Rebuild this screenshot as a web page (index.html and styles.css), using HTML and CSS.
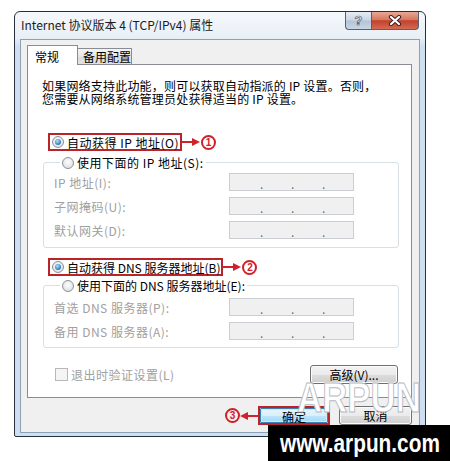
FILE: index.html
```html
<!DOCTYPE html>
<html lang="zh-CN">

<head>
    <meta charset="UTF-8">
    <title>Internet 协议版本 4 (TCP/IPv4) 属性</title>
    <link rel="stylesheet" href="styles.css">
</head>

<body>

    <div class="window">
        <div class="titlebar">
            <span class="title">Internet 协议版本 4 (TCP/IPv4) 属性</span>
            <div class="caption-btns">
                <span class="cap-btn help">?</span>
                <span class="cap-btn close">
                    <svg width="14" height="11" viewBox="0 0 14 11">
                        <path d="M3 2 L11 9 M11 2 L3 9" stroke="#3b2320" stroke-width="4.2" stroke-linecap="round" />
                        <path d="M3 2 L11 9 M11 2 L3 9" stroke="#fff" stroke-width="2.2" stroke-linecap="round" />
                    </svg>
                </span>
            </div>
        </div>

        <div class="dialog">
            <div class="tabs">
                <span class="tab active">常规</span>
                <span class="tab">备用配置</span>
            </div>

            <div class="panel">
                <p class="intro">如果网络支持此功能，则可以获取自动指派的 IP 设置。否则，<br>您需要从网络系统管理员处获得适当的 IP 设置。</p>

                <div class="mark-row ip-auto">
                    <label class="marked option"><span class="radio on"></span>自动获得 IP 地址(O)</label>
                    <svg class="arrow" width="18" height="10" viewBox="0 0 18 10">
                        <line x1="0" y1="5" x2="11" y2="5" stroke="#d0202a" stroke-width="2" />
                        <polygon points="10,1 18,5 10,9" fill="#d0202a" />
                    </svg>
                    <span class="num">1</span>
                </div>

                <fieldset class="group ip-group">
                    <legend class="option"><span class="radio"></span>使用下面的 IP 地址(S):</legend>
                    <div class="field first"><span>IP 地址(I):</span><span class="ip"><i>.</i><i>.</i><i>.</i></span></div>
                    <div class="field"><span>子网掩码(U):</span><span class="ip"><i>.</i><i>.</i><i>.</i></span></div>
                    <div class="field"><span>默认网关(D):</span><span class="ip"><i>.</i><i>.</i><i>.</i></span></div>
                </fieldset>

                <div class="mark-row dns-auto">
                    <label class="marked option"><span class="radio on"></span>自动获得 DNS 服务器地址(B)</label>
                    <svg class="arrow" width="18" height="10" viewBox="0 0 18 10">
                        <line x1="0" y1="5" x2="11" y2="5" stroke="#d0202a" stroke-width="2" />
                        <polygon points="10,1 18,5 10,9" fill="#d0202a" />
                    </svg>
                    <span class="num">2</span>
                </div>

                <fieldset class="group dns-group">
                    <legend class="option"><span class="radio"></span>使用下面的 DNS 服务器地址(E):</legend>
                    <div class="field first"><span>首选 DNS 服务器(P):</span><span class="ip"><i>.</i><i>.</i><i>.</i></span></div>
                    <div class="field"><span>备用 DNS 服务器(A):</span><span class="ip"><i>.</i><i>.</i><i>.</i></span></div>
                </fieldset>

                <div class="bottom-row">
                    <label class="check"><span class="checkbox"></span>退出时验证设置(L)</label>
                    <button class="btn adv">高级(V)...</button>
                </div>
            </div>

            <div class="buttons">
                <span class="num">3</span>
                <svg class="arrow" width="18" height="10" viewBox="0 0 18 10">
                    <line x1="7" y1="5" x2="18" y2="5" stroke="#d0202a" stroke-width="2" />
                    <polygon points="8,1 0,5 8,9" fill="#d0202a" />
                </svg>
                <span class="ok-mark"><button class="btn ok">确定</button></span>
                <button class="btn cancel">取消</button>
            </div>
        </div>
    </div>

    <div class="watermark">ARPUN</div>
    <div class="site"><span>www.arpun.com</span></div>

</body>

</html>
```

FILE: styles.css
```css
* {
    box-sizing: border-box;
}

body {
    margin: 0;
    width: 450px;
    height: 461px;
    background: #fff;
    font-family: "Noto Sans CJK SC", "Liberation Sans", sans-serif;
    font-size: 12px;
    color: #000;
    position: relative;
    overflow: hidden;
}

.window {
    margin: 11px 0 0 14px;
    width: 412px;
    height: 426px;
    border: 1px solid #27313d;
    border-radius: 6px 6px 2px 2px;
    background: linear-gradient(#f6f8fb, #e9eff7 26px, #cfdff2 34px);
    display: flex;
    flex-direction: column;
}

.titlebar {
    height: 27px;
    flex: none;
    display: flex;
    align-items: flex-start;
    padding-left: 6px;
}

.title {
    line-height: 26px;
    color: #1a1a1a;
}

.caption-btns {
    margin-left: auto;
    margin-right: 6px;
    display: flex;
}

.cap-btn {
    height: 18px;
    border: 1px solid #56636f;
    border-top: none;
    display: flex;
    align-items: center;
    justify-content: center;
}

.help {
    width: 26px;
    border-right: none;
    border-radius: 0 0 0 4px;
    background: linear-gradient(#e6ecf4, #cad6e4 48%, #b3c4d8 52%, #c9d6e5);
    color: #fff;
    font-family: "Liberation Sans", sans-serif;
    font-weight: bold;
    font-size: 13px;
    -webkit-text-stroke: 0.7px #4a5565;
}

.close {
    width: 48px;
    border-radius: 0 0 4px 0;
    background: linear-gradient(#eaa897, #d7775f 45%, #c3412b 52%, #d46a54);
}

.dialog {
    flex: 1;
    margin: 0 5px 3px;
    border: 1px solid #8ca0b6;
    background: #f0f0f0;
    padding: 5px 7px 0 6px;
    display: flex;
    flex-direction: column;
}

/* onglets */
.tabs {
    display: flex;
    align-items: flex-end;
    height: 20px;
    margin-bottom: -1px;
    position: relative;
    z-index: 1;
}

.tab {
    height: 16px;
    width: 55px;
    margin-left: -1px;
    margin-bottom: 1px;
    padding-left: 5px;
    border: 1px solid #898c95;
    border-bottom: none;
    background: linear-gradient(#f4f4f4, #e6e6e6 50%, #dadada 51%, #e2e2e2);
    line-height: 15px;
}

.tab.active {
    height: 20px;
    width: 51px;
    margin: 0;
    padding-left: 7px;
    background: #fff;
    line-height: 22px;
    z-index: 1;
}

.panel {
    height: 334px;
    flex: none;
    background: #fff;
    border: 1px solid #898c95;
    padding-top: 14px;
    display: flex;
    flex-direction: column;
}

.intro {
    margin: 0 0 0 14px;
    line-height: 13px;
    letter-spacing: 0.2px;
}

/* options radio */
.option {
    display: flex;
    align-items: center;
    white-space: nowrap;
    letter-spacing: 0.5px;
}

.dns-auto .option,
.dns-group legend {
    letter-spacing: 0;
}

.radio {
    width: 12px;
    height: 12px;
    margin-right: 3px;
    border: 1px solid #8d9196;
    border-radius: 50%;
    background: radial-gradient(circle at 50% 40%, #fdfdfd, #d6d9dc);
    display: flex;
    align-items: center;
    justify-content: center;
    flex: none;
}

.radio.on::after {
    content: "";
    width: 6px;
    height: 6px;
    border-radius: 50%;
    background: radial-gradient(circle at 40% 35%, #b4e0fb, #3a86c8 60%, #1d5a96);
}

.mark-row {
    display: flex;
    align-items: center;
    margin-left: 20px;
}

.ip-auto {
    margin-top: 28px;
}

.dns-auto {
    margin-top: 10px;
}

.marked {
    height: 18px;
    border: 2px solid #b9232a;
    padding: 0 1px 0 2px;
}

.arrow {
    display: block;
    flex: none;
}

.num {
    width: 15px;
    height: 15px;
    margin-left: 1px;
    border: 2px solid #d0202a;
    border-radius: 50%;
    color: #d0202a;
    font-family: "Liberation Sans", sans-serif;
    font-weight: bold;
    font-size: 10px;
    line-height: 11px;
    text-align: center;
    flex: none;
}

/* groupes */
.group {
    margin: 3px 12px 0 15px;
    padding: 0 0 8px 10px;
    border: 1px solid #d5dfe5;
    border-radius: 3px;
    min-width: 0;
}

.group legend {
    height: 17px;
    margin-left: 6px;
    padding: 0 2px;
}

.dns-group {
    margin-top: 1px;
    padding-bottom: 7px;
}

.field {
    display: grid;
    grid-template-columns: 175px 125px;
    align-items: center;
    height: 18px;
    margin-top: 6px;
    color: #a0a0a0;
    letter-spacing: 0.5px;
}

.ip-group .field.first {
    margin-top: 2px;
}

.dns-group .field.first {
    margin-top: 4px;
}

.ip {
    height: 18px;
    border: 1px solid #cbcfd4;
    background: #f0f0f0;
    display: flex;
    justify-content: space-evenly;
    padding-left: 3px;
}

.ip i {
    font-style: normal;
    color: #707070;
    line-height: 20px;
}

.bottom-row {
    display: flex;
    align-items: center;
    justify-content: space-between;
    height: 19px;
    margin: 17px 13px 0 27px;
}

.check {
    display: flex;
    align-items: center;
    color: #a0a0a0;
    letter-spacing: 0.5px;
}

.checkbox {
    width: 13px;
    height: 13px;
    margin-right: 3px;
    border: 1px solid #b8b8b8;
    background: #f4f4f4;
}

/* boutons */
.btn {
    font-family: "Noto Sans CJK SC", "Liberation Sans", sans-serif;
    font-size: 12px;
    color: #000;
    padding: 0;
    border: 1px solid #707070;
    border-radius: 3px;
    background: linear-gradient(#f2f2f2, #ebebeb 50%, #dddddd 51%, #cfcfcf);
    box-shadow: inset 0 0 0 1px #fbfbfb;
    line-height: 15px;
}

.adv {
    width: 88px;
    height: 19px;
}

.buttons {
    display: flex;
    align-items: center;
    justify-content: flex-end;
    height: 19px;
    margin-top: 8px;
}

.ok-mark {
    display: flex;
    width: 72px;
    height: 19px;
    border: 2px solid #b9232a;
}

.ok {
    width: 100%;
    height: 100%;
    border-color: #3c7fb1;
    border-radius: 1px;
    background: linear-gradient(#e9f6fd, #d8effc 50%, #bde5fc 51%, #a6d8f4);
    box-shadow: inset 0 0 0 1px #c9ecfd;
}

.cancel {
    width: 73px;
    height: 19px;
    margin-left: 9px;
}

/* filigrane */
.watermark {
    position: absolute;
    left: 297px;
    top: 377px;
    font-family: "Liberation Sans", sans-serif;
    font-weight: bold;
    font-size: 42px;
    line-height: 42px;
    color: #fff;
    -webkit-text-stroke: 1px #b4bac2;
    transform: scaleX(0.83);
    transform-origin: left top;
}

.site {
    position: absolute;
    left: 268px;
    top: 425px;
    width: 182px;
    height: 36px;
    padding-left: 12px;
    background: #000;
    color: #fff;
    font-family: "Liberation Sans", sans-serif;
    font-weight: bold;
    font-size: 26px;
    line-height: 36px;
    white-space: nowrap;
    overflow: hidden;
}

.site span {
    display: inline-block;
    transform: scaleX(0.8);
    transform-origin: left center;
}
```
